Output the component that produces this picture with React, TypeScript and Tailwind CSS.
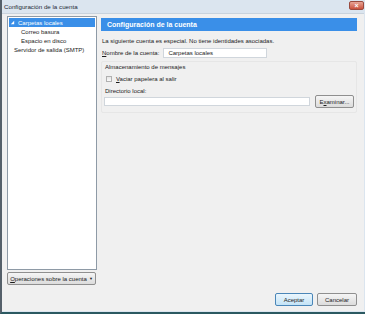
export default function App() {
  return (
    <div className="w-[365px] h-[314px] flex flex-col bg-[#dbe5ef] border-l-2 border-l-[#55606a] border-b-2 border-b-[#2b5961] font-['Liberation_Sans',Arial,sans-serif] text-[6px] leading-[8px] text-[#1b1b1b] overflow-hidden">
      {/* title bar */}
      <div className="h-[13px] flex items-center justify-between pl-[2px] pr-[1px] shrink-0">
        <span className="text-[6.2px] text-[#1e2a36]">Configuración de la cuenta</span>
        <div className="w-[15px] h-[9px] mt-[-2px] rounded-[2px] bg-gradient-to-b from-[#e8a597] to-[#c9503c] border border-[#9a4a3e] flex items-center justify-center text-white text-[7px] leading-none font-bold">
          ×
        </div>
      </div>

      {/* client area */}
      <div className="flex-1 flex bg-[#f0f0f0] mr-[1px] mb-[1px] pt-[2px] pl-[5px] pr-[7px] pb-[5px] border-t border-t-[#c9d3dd]">
        {/* left column */}
        <div className="w-[90px] flex flex-col shrink-0 pb-[21px]">
          <div className="flex-1 bg-white border border-[#8e9aa6] p-[1px]">
            <div className="h-[9px] flex items-center bg-[#3a8fe8] text-white">
              <svg width="5" height="5" viewBox="0 0 6 6" className="ml-[1px] mr-[3px]">
                <path d="M5 1 L5 5 L1 5 Z" fill="#ffffff" />
              </svg>
              <span>Carpetas locales</span>
            </div>
            <div className="h-[9px] flex items-center pl-[12px]">Correo basura</div>
            <div className="h-[9px] flex items-center pl-[12px]">Espacio en disco</div>
            <div className="h-[9px] flex items-center pl-[5px]">Servidor de salida (SMTP)</div>
          </div>
          <div className="mt-[2px] h-[13px] w-[89px] flex items-center justify-center rounded-[2px] border border-[#8f8f8f] bg-gradient-to-b from-[#f5f5f5] to-[#dcdcdc]">
            <span>
              <span className="underline">O</span>peraciones sobre la cuenta
            </span>
            <span className="ml-[2px] text-[4px]">▼</span>
          </div>
        </div>

        {/* right column */}
        <div className="flex-1 ml-[4px] flex flex-col pt-[2px]">
          <div className="h-[13px] bg-[#3a8fe8] flex items-center pl-[6px] text-white font-bold text-[7px]">
            Configuración de la cuenta
          </div>
          <div className="mt-[6px] pl-[1px]">La siguiente cuenta es especial. No tiene identidades asociadas.</div>
          <div className="mt-[3px] flex items-center pl-[1px]">
            <span>
              <span className="underline">N</span>ombre de la cuenta:
            </span>
            <div className="ml-[4px] w-[104px] h-[10px] bg-white border border-[#d0d6dc] flex items-center pl-[4px]">
              Carpetas locales
            </div>
          </div>
          <div className="mt-[3px] border border-[#e6e6e6] rounded-[2px] pt-[1px] px-[2px] pb-[4px]">
            <div className="pl-[1px]">Almacenamiento de mensajes</div>
            <div className="mt-[4px] flex items-center pl-[2px]">
              <div className="w-[6px] h-[6px] border border-[#b0b0b0] bg-gradient-to-b from-[#e6e6e6] to-[#fafafa]" />
              <span className="ml-[4px]">
                <span className="underline">V</span>aciar papelera al salir
              </span>
            </div>
            <div className="mt-[4px] pl-[1px]">Directorio local:</div>
            <div className="flex items-center">
              <div className="flex-1 h-[9px] bg-white border border-[#d0d6dc]" />
              <div className="ml-[5px] w-[39px] h-[13px] flex items-center justify-center rounded-[2px] border border-[#8f8f8f] bg-gradient-to-b from-[#f5f5f5] to-[#dcdcdc]">
                <span>
                  E<span className="underline">x</span>aminar...
                </span>
              </div>
            </div>
          </div>
          <div className="flex-1" />
          <div className="flex justify-end gap-[4px]">
            <div className="w-[38px] h-[13px] flex items-center justify-center rounded-[2px] border border-[#4a86b8] bg-gradient-to-b from-[#eaf6fd] to-[#c4e3f6]">
              Aceptar
            </div>
            <div className="w-[40px] h-[13px] flex items-center justify-center rounded-[2px] border border-[#8f8f8f] bg-gradient-to-b from-[#f5f5f5] to-[#dcdcdc]">
              Cancelar
            </div>
          </div>
        </div>
      </div>
    </div>
  );
}
